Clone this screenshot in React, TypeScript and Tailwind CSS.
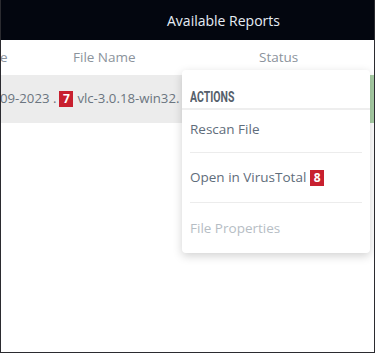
import React from 'react';

const Badge: React.FC<{ n: string }> = ({ n }) => (
  <span className="inline-flex h-[16px] w-[14px] items-center justify-center bg-[#c8202f] text-[12px] font-bold leading-none text-white">
    {n}
  </span>
);

const menuItems = [
  { id: 1, label: 'Rescan File', badge: '', disabled: false, h: 'h-[43px] pb-[4px]' },
  { id: 2, label: 'Open in VirusTotal', badge: '8', disabled: false, h: 'h-[50px]' },
  { id: 3, label: 'File Properties', badge: '', disabled: true, h: 'h-[50px]' },
];

const App: React.FC = () => {
  return (
    <div
      className="relative h-[353px] w-[375px] overflow-hidden border-x border-b border-[#2b2b30] bg-white"
      style={{ fontFamily: '"Open Sans", "Noto Sans", sans-serif' }}
    >
      <div className="flex h-[40px] items-center bg-[#03060f] pl-[166px] text-[14px] text-[#e6edf5]">
        Available Reports
      </div>

      <div className="relative flex h-[35px] items-center text-[13.5px] text-[#8b939c]">
        <span className="ml-[-1px] w-[73px]">e</span>
        <span className="w-[186px]">File Name</span>
        <span>Status</span>
        <span className="absolute bottom-0 left-[64px] h-[3px] w-[3px] bg-white" />
      </div>

      <div className="flex h-[48px] items-center bg-[#ececec] text-[13.2px] text-[#6b7580]">
        <span className="ml-[-1px]">09-2023 .</span>
        <span className="ml-[3px]">
          <Badge n="7" />
        </span>
        <span className="ml-[4px] whitespace-nowrap">vlc-3.0.18-win32.</span>
        <span className="ml-auto h-full w-[4px] bg-[#a9cfa6]" />
      </div>

      <div className="absolute left-[181px] top-[70px] w-[188px] rounded-[4px] bg-white shadow-[0_3px_10px_rgba(0,0,0,0.18)]">
        <div className="flex h-[40px] items-end border-b-2 border-[#eeeeee] px-[8px] pb-[1px]">
          <span
            className="inline-block origin-left scale-x-[0.7] text-[15px] font-bold leading-[20px] text-[#56606b]"
            style={{ fontFamily: 'Roboto, "Liberation Sans", sans-serif' }}
          >
            ACTIONS
          </span>
        </div>
        <div className="px-[8px]">
          {menuItems.map((item, i) => (
            <div
              key={item.id}
              className={
                'flex items-center gap-[4px] text-[13.5px] ' +
                item.h +
                ' ' +
                (i < menuItems.length - 1 ? 'border-b border-[#ececec] ' : '') +
                (item.disabled ? 'text-[#b6bdc4]' : 'text-[#5f6d7b]')
              }
            >
              {item.label}
              {item.badge && <Badge n={item.badge} />}
            </div>
          ))}
        </div>
      </div>
    </div>
  );
};

export default App;
